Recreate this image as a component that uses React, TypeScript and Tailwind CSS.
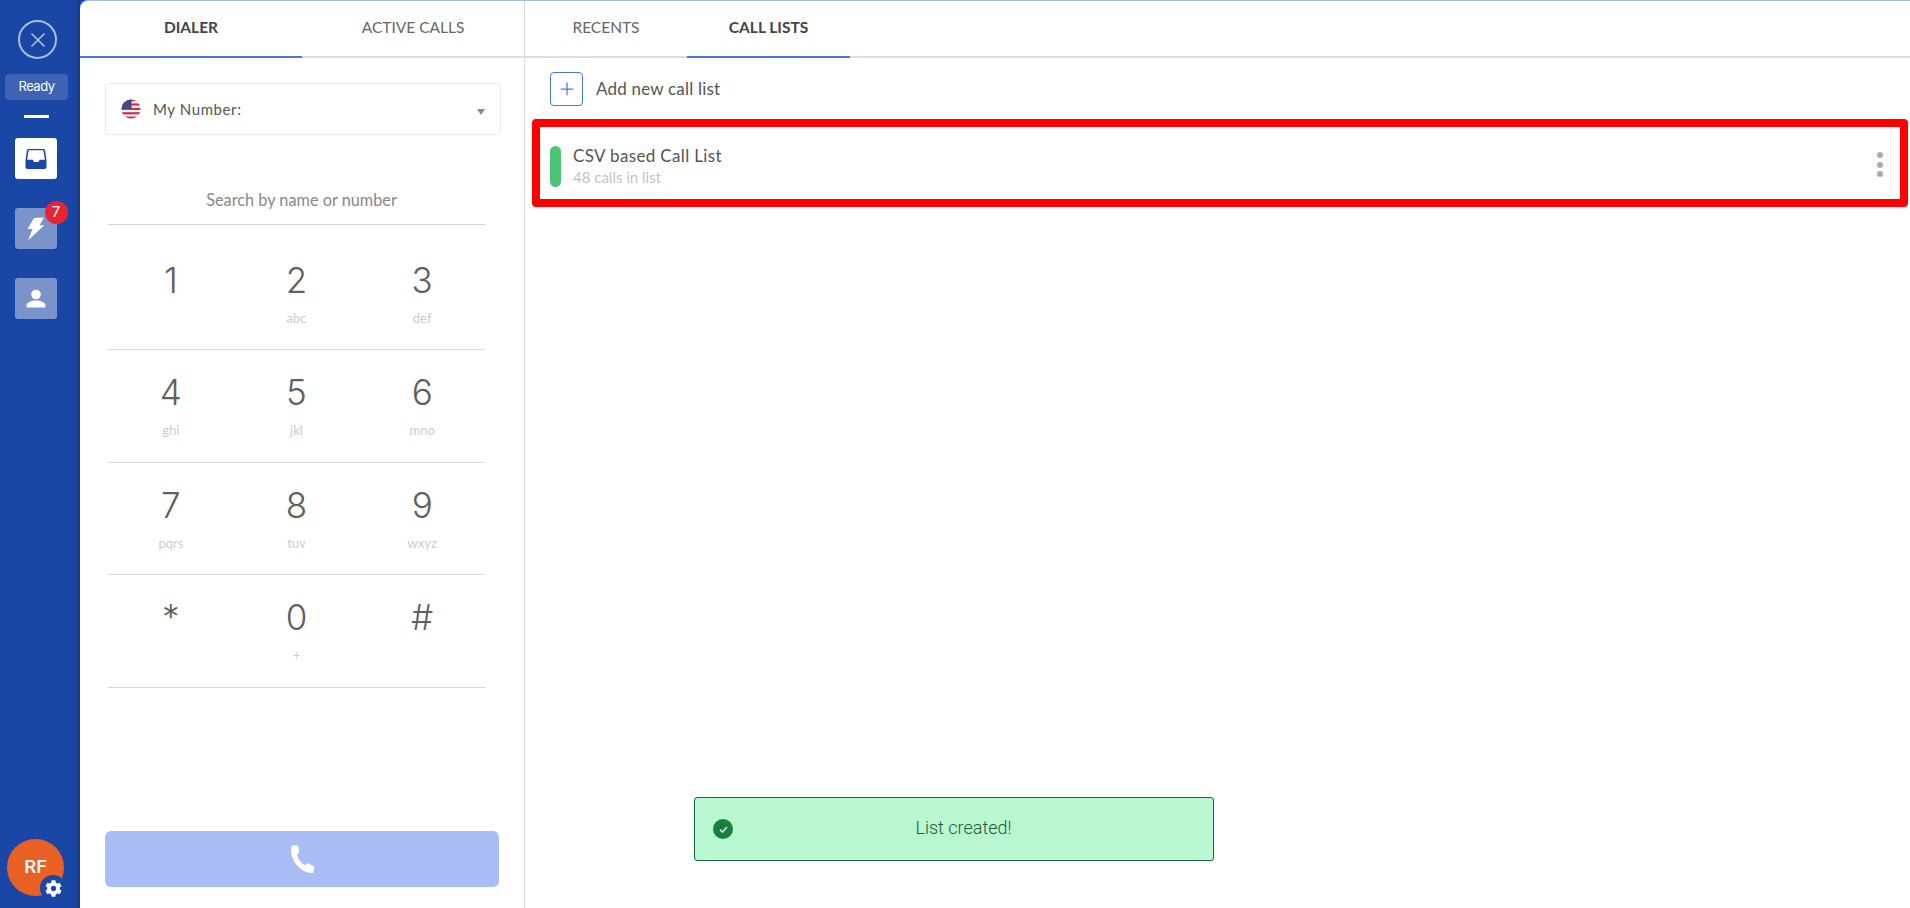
import { FaCog } from 'react-icons/fa'
import { Plus, X } from 'lucide-react'

const keys = [
  [['1', ''], ['2', 'abc'], ['3', 'def']],
  [['4', 'ghi'], ['5', 'jkl'], ['6', 'mno']],
  [['7', 'pqrs'], ['8', 'tuv'], ['9', 'wxyz']],
  [['*', ''], ['0', '+'], ['#', '']],
]

function Flag() {
  return (
    <svg width="20" height="20" viewBox="0 0 20 20" className="shrink-0">
      <defs>
        <clipPath id="flag-clip">
          <circle cx="10" cy="10" r="9.5" />
        </clipPath>
      </defs>
      <g clipPath="url(#flag-clip)">
        <rect width="20" height="20" fill="#f4f4f6" />
        <rect y="0" width="20" height="2.2" fill="#c9304a" />
        <rect y="4.4" width="20" height="2.2" fill="#c9304a" />
        <rect y="8.8" width="20" height="2.2" fill="#c9304a" />
        <rect y="13.2" width="20" height="2.2" fill="#c9304a" />
        <rect y="17.6" width="20" height="2.4" fill="#c9304a" />
        <rect width="10.5" height="10" fill="#3f4a86" />
      </g>
    </svg>
  )
}

function Tab({ label, active, width }: { label: string; active?: boolean; width: string }) {
  return (
    <div
      className={`${width} flex items-center justify-center text-[15.5px] border-b-2 pb-[1px] ${
        active ? 'font-bold text-[#444444] border-[#4a76e0]' : 'text-[#666666] border-[#dedede]'
      }`}
    >
      {label}
    </div>
  )
}

export default function App() {
  return (
    <div className="flex h-screen overflow-hidden bg-[#1a47a5] font-['Lato',sans-serif]">
      {/* Sidebar */}
      <aside className="w-[80px] shrink-0 flex flex-col items-center shadow-[inset_-5px_0_5px_-3px_rgba(0,0,0,0.22)] pr-[9px] pt-[20px] pb-[12px]">
        <div className="ml-[4px] w-[39px] h-[39px] rounded-full border-2 border-[#a9bbe2] flex items-center justify-center">
          <X className="w-[24px] h-[24px] text-[#b9c8ea]" strokeWidth={1.5} />
        </div>
        <div className="ml-[2px] mt-[15px] w-[63px] h-[26px] rounded bg-[#3e63b4] text-white text-[13px] flex items-center justify-center font-['Inter',sans-serif] tracking-[-0.5px]">
          Ready
        </div>
        <div className="ml-[2px] mt-[15px] w-[25px] h-[3px] bg-white" />
        <div className="mt-[20px] w-[42px] h-[41px] rounded-[3px] bg-white flex items-center justify-center">
          <svg width="22" height="22" viewBox="0 0 22 22">
            <path
              d="M3.500 1h15c.8 0 1.500.6 1.600 1.400L21.500 12v7c0 1.100-.9 2-2 2h-17c-1.100 0-2-.9-2-2v-7L1.900 2.400C2 1.600 2.700 1 3.500 1Z"
              fill="#1a47a5"
            />
            <path d="M3.600 2.200h14.800l1.500 9.500h-5.200l-1.200 2.300H9l-1.200-2.300H2.100L3.600 2.200Z" fill="#fff" />
          </svg>
        </div>
        <div className="relative mt-[29px] w-[42px] h-[41px] rounded-[3px] bg-[#7a94cb] flex items-center justify-center">
          <svg width="18" height="24" viewBox="0 0 18 24">
            <path d="M7 1 L17 0.5 L12.500 8.500 L17.500 8 L1 23.500 L5.500 12 L0.500 12 Z" fill="#fff" />
          </svg>
          <div className="absolute -top-[7px] -right-[11px] w-[23px] h-[23px] rounded-full bg-[#e8242f] text-white text-[15px] flex items-center justify-center font-['Inter',sans-serif]">
            7
          </div>
        </div>
        <div className="mt-[29px] w-[42px] h-[41px] rounded-[3px] bg-[#7a94cb] flex items-center justify-center">
          <svg width="20" height="20" viewBox="0 0 20 20" fill="#fff">
            <circle cx="10" cy="5.500" r="4.800" />
            <path d="M0.500 18.500v-2.200c0-3 5-4.800 9.500-4.800s9.500 1.800 9.500 4.800v2.200Z" />
          </svg>
        </div>
        <div className="relative mt-auto w-[57px] h-[57px] rounded-full bg-[#e86023] text-white text-[19px] font-medium flex items-center justify-center font-['Roboto',sans-serif]">
          RF
          <div className="absolute -right-[2px] -bottom-[5px] w-[26px] h-[26px] rounded-full bg-[#1a47a5] flex items-center justify-center">
            <FaCog className="w-[17px] h-[17px] text-white" />
          </div>
        </div>
      </aside>

      <main className="flex-1 flex min-w-0 bg-white rounded-tl-lg border-t border-[#a8bdf5]">
        {/* Dialer column */}
        <section className="w-[445px] shrink-0 flex flex-col border-r border-[#d9d9d9]">
          <div className="flex h-[57px]">
            <Tab label="DIALER" active width="w-[222px]" />
            <Tab label="ACTIVE CALLS" width="flex-1" />
          </div>
          <div className="mt-[25px] mx-[25px] w-[396px] h-[52px] rounded border border-[#ebebeb] flex items-center pl-[15px] pr-[15px]">
            <Flag />
            <span className="ml-[12px] text-[15px] tracking-[0.6px] text-[#555555]">My Number:</span>
            <svg width="8" height="6" viewBox="0 0 8 6" className="ml-auto mt-[5px]">
              <path d="M0 0h8L4 6Z" fill="#8a8a8a" />
            </svg>
          </div>
          <div className="mt-[54px] mx-[28px] w-[377px] h-[36px] pl-[10px] border-b border-[#d5d5d5] text-center text-[16.3px] leading-[22px] text-[#888888]">
            Search by name or number
          </div>
          <div className="mx-[28px] w-[377px]">
            {keys.map((row, i) => (
              <div
                key={i}
                className={`grid grid-cols-3 border-b border-[#d9d9d9] text-center ${
                  i === 0 ? 'h-[125px] pt-[30px]' : 'h-[112.5px] pt-[17px]'
                }`}
              >
                {row.map(([digit, letters]) => (
                  <div key={digit} className="flex flex-col items-center">
                    <span className="text-[35px] leading-[50px] font-light text-[#5f5f5f] font-['Inter',sans-serif]">{digit}</span>
                    <span className="h-[18px] mt-[4px] text-[13px] leading-[18px] text-[#cccccc]">{letters}</span>
                  </div>
                ))}
              </div>
            ))}
          </div>
          <div className="mt-auto mb-[21px] mx-[25px] w-[394px] h-[56px] rounded-md bg-[#a8bdf5] flex items-center justify-center">
            <svg width="25" height="29" viewBox="0 0 25 29" fill="#fff">
              <path d="M3.500 0.500h3.200c1 0 1.700.7 1.800 1.700l.5 4.600c.1.900-.4 1.500-1.100 2.100l-1 .8c1 4.300 4.400 8.600 8.400 10.600l1-.9c.8-.8 1.600-1 2.500-.6l4.300 2c1 .5 1.400 1.300 1.200 2.200l-.9 3.700c-.3 1-1 1.500-2.100 1.400C10 27 1 16.500 1 3.200 1 1.500 2 .5 3.500.5Z" />
            </svg>
          </div>
        </section>

        {/* Call lists column */}
        <section className="relative flex-1 min-w-0 flex flex-col">
          <div className="flex h-[57px]">
            <Tab label="RECENTS" width="w-[162px]" />
            <Tab label="CALL LISTS" active width="w-[163px]" />
            <Tab label="" width="flex-1" />
          </div>
          <div className="mt-[14px] ml-[25px] flex items-center h-[34px]">
            <div className="w-[33px] h-[34px] rounded border border-[#4a76e0] flex items-center justify-center">
              <Plus className="w-[20px] h-[20px] text-[#4a76e0]" strokeWidth={1.5} />
            </div>
            <span className="ml-[13px] text-[17px] tracking-[0.2px] text-[#555555]">Add new call list</span>
          </div>
          <div className="mt-[13px] ml-[7px] mr-[2px] h-[88px] border-[8px] border-[#ff0000] rounded flex items-center pl-[10px] pr-[17px]">
            <div className="mt-[6px] w-[11px] h-[41px] rounded-full bg-[#4bc476]" />
            <div className="ml-[12px] mt-[6px]">
              <div className="text-[17px] leading-[22px] tracking-[0.35px] text-[#555555]">CSV based Call List</div>
              <div className="text-[15px] leading-[20px] text-[#c4c4c4]">48 calls in list</div>
            </div>
            <div className="ml-auto mt-[3px] flex flex-col gap-[3.5px]">
              <div className="w-[6px] h-[6px] rounded-full bg-[#aaaaaa]" />
              <div className="w-[6px] h-[6px] rounded-full bg-[#aaaaaa]" />
              <div className="w-[6px] h-[6px] rounded-full bg-[#aaaaaa]" />
            </div>
          </div>

          {/* Toast */}
          <div className="absolute left-[169px] top-[796px] w-[520px] h-[64px] rounded-[3px] border border-[#1a6b3c] bg-[#b9f7d0] flex items-center pl-[18px] font-['Roboto',sans-serif]">
            <div className="w-[20px] h-[20px] rounded-full bg-[#16803f] flex items-center justify-center">
              <svg width="11" height="11" viewBox="0 0 11 11" fill="none" stroke="#fff" strokeWidth="1.3">
                <path d="M2 5.800 4.500 8 9 3" />
              </svg>
            </div>
            <span className="flex-1 text-center pr-[19px] pb-[4px] text-[18px] font-light text-[#1c5c38]">List created!</span>
          </div>
        </section>
      </main>
    </div>
  )
}
